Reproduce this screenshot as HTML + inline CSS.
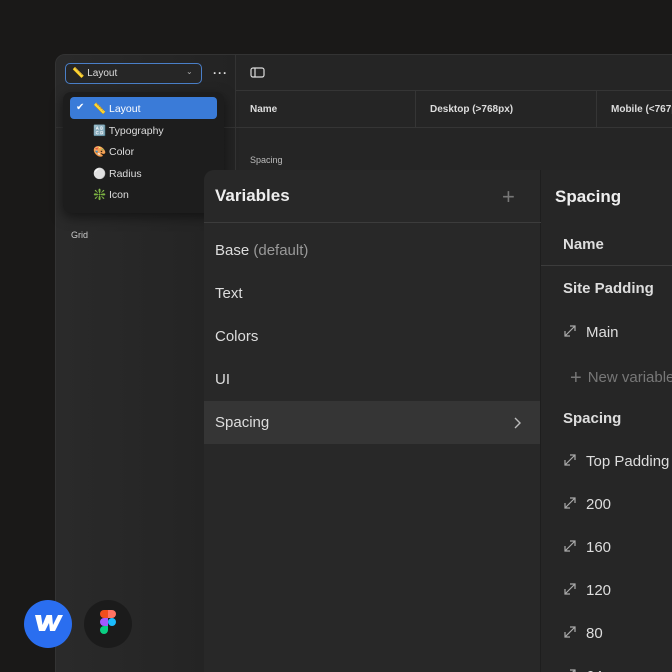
<!DOCTYPE html>
<html><head><meta charset="utf-8"><style>
*{margin:0;padding:0;box-sizing:border-box}
html,body{width:672px;height:672px;overflow:hidden}
body{background:#1a1918;font-family:"Liberation Sans",sans-serif;position:relative;color:#e6e6e6}
.abs{position:absolute}
.win{left:55px;top:54px;width:640px;height:640px;background:#252525;border:1px solid #333;border-radius:10px;overflow:hidden}
.side{left:0;top:0;width:180px;height:100%;background:linear-gradient(90deg,#2a2a2a,#232323);border-right:1px solid #333}
.t{font-size:10px;color:#ddd}
.vp{left:204px;top:170px;width:337px;height:502px;background:#282828;border-radius:10px 0 0 0;border-right:1px solid #1e1e1e}
.row{position:absolute;left:11px;font-size:15px;color:#ddd}
.sp{left:541px;top:170px;width:140px;height:502px;background:#262626;overflow:hidden}
.r2{position:absolute;left:22px;font-size:15px;color:#ddd;white-space:nowrap}
.ic{display:inline-block;width:14px;vertical-align:-1px;margin-right:9px}
</style></head><body>
<div class="abs win">
 <div class="abs side"></div>
 <div class="abs" style="left:180px;top:35px;width:460px;height:1px;background:#353535"></div>
 <div class="abs" style="left:180px;top:72px;width:460px;height:1px;background:#353535"></div>
 <div class="abs" style="left:0;top:72px;width:180px;height:1px;background:#333"></div>
 <div class="abs" style="left:359px;top:36px;width:1px;height:36px;background:#353535"></div>
 <div class="abs" style="left:540px;top:36px;width:1px;height:36px;background:#353535"></div>
 <div class="abs t" style="left:194px;top:49px;font-weight:bold">Name</div>
 <div class="abs t" style="left:374px;top:49px;font-weight:bold">Desktop (&gt;768px)</div>
 <div class="abs t" style="left:555px;top:49px;font-weight:bold;white-space:nowrap">Mobile (&lt;767px)</div>
 <div class="abs t" style="left:194px;top:100px;font-size:9px;color:#bbb">Spacing</div>
 <div class="abs t" style="left:15px;top:175px;font-size:9px;color:#ccc">Grid</div>
 <div class="abs" style="left:9px;top:8px;width:137px;height:21px;border:1px solid #4a7fc8;border-radius:5px;background:#262626"></div>
 <div class="abs t" style="left:16px;top:13px;font-size:10px">📏 Layout</div>
 <div class="abs t" style="left:130px;top:12px;font-size:8px;color:#aaa">⌄</div>
 <div class="abs" style="left:157px;top:11px;font-size:12px;color:#ddd;letter-spacing:1px;font-weight:bold">···</div>
 <svg class="abs" style="left:194px;top:12px" width="16" height="12"><rect x="1" y="1" width="13" height="9" rx="2" fill="none" stroke="#ddd" stroke-width="1.2"/><line x1="5" y1="1" x2="5" y2="10" stroke="#ddd" stroke-width="1.2"/></svg>
</div>
<div class="abs" style="left:63px;top:92px;width:161px;height:121px;background:#1d1d1d;border-radius:8px;box-shadow:0 4px 12px rgba(0,0,0,.5)"></div>
<div class="abs" style="left:70px;top:97px;width:147px;height:22px;background:#3a7bd8;border-radius:4px"></div>
<div class="abs t" style="left:76px;top:102px;font-size:10px;color:#fff">✔</div>
<div class="abs t" style="left:93px;top:102px;font-size:10.5px;color:#fff">📏 Layout</div>
<div class="abs t" style="left:93px;top:124px;font-size:10.5px">🔠 Typography</div>
<div class="abs t" style="left:93px;top:145px;font-size:10.5px">🎨 Color</div>
<div class="abs t" style="left:93px;top:167px;font-size:10.5px">⚪ Radius</div>
<div class="abs t" style="left:93px;top:188px;font-size:10.5px">❇️ Icon</div>

<div class="abs vp">
 <div class="row" style="top:16px;font-size:17px;font-weight:bold;color:#eee">Variables</div>
 <div class="abs" style="left:298px;top:14px;font-size:22px;color:#777;font-weight:300">+</div>
 <div class="abs" style="left:0;top:52px;width:337px;height:1px;background:#3c3c3c"></div>
 <div class="row" style="top:72px">Base <span style="color:#999">(default)</span></div>
 <div class="row" style="top:115px">Text</div>
 <div class="row" style="top:158px">Colors</div>
 <div class="row" style="top:201px">UI</div>
 <div class="abs" style="left:0;top:231px;width:336px;height:43px;background:#353535"></div>
 <div class="row" style="top:244px">Spacing</div>
 <svg class="abs" style="left:309px;top:246px" width="10" height="14"><path d="M2 2l5 5-5 5" fill="none" stroke="#bbb" stroke-width="1.4"/></svg>
</div>
<div class="abs sp">
 <div class="abs" style="left:14px;top:17px;font-size:17px;font-weight:bold;color:#eee">Spacing</div>
 <div class="abs" style="left:0;top:95px;width:140px;height:1px;background:#3c3c3c"></div>
 <div class="r2" style="top:66px;font-weight:bold">Name</div>
 <div class="r2" style="top:110px;font-weight:bold">Site Padding</div>
 <div class="r2" style="top:154px"><svg class="ic" width="14" height="14"><path d="M2 12L12 2M7 2h5v5M2 7v5h5" fill="none" stroke="#aaa" stroke-width="1.2"/></svg>Main</div>
 <div class="r2" style="top:197px;color:#777;left:29px"><span style="font-size:20px;vertical-align:-2px;margin-right:6px">+</span>New variable</div>
 <div class="r2" style="top:240px;font-weight:bold">Spacing</div>
 <div class="r2" style="top:283px"><svg class="ic" width="14" height="14"><path d="M2 12L12 2M7 2h5v5M2 7v5h5" fill="none" stroke="#aaa" stroke-width="1.2"/></svg>Top Padding</div>
 <div class="r2" style="top:326px"><svg class="ic" width="14" height="14"><path d="M2 12L12 2M7 2h5v5M2 7v5h5" fill="none" stroke="#aaa" stroke-width="1.2"/></svg>200</div>
 <div class="r2" style="top:369px"><svg class="ic" width="14" height="14"><path d="M2 12L12 2M7 2h5v5M2 7v5h5" fill="none" stroke="#aaa" stroke-width="1.2"/></svg>160</div>
 <div class="r2" style="top:412px"><svg class="ic" width="14" height="14"><path d="M2 12L12 2M7 2h5v5M2 7v5h5" fill="none" stroke="#aaa" stroke-width="1.2"/></svg>120</div>
 <div class="r2" style="top:455px"><svg class="ic" width="14" height="14"><path d="M2 12L12 2M7 2h5v5M2 7v5h5" fill="none" stroke="#aaa" stroke-width="1.2"/></svg>80</div>
 <div class="r2" style="top:498px"><svg class="ic" width="14" height="14"><path d="M2 12L12 2M7 2h5v5M2 7v5h5" fill="none" stroke="#aaa" stroke-width="1.2"/></svg>64</div>
</div>

<svg class="abs" style="left:24px;top:600px" width="48" height="48"><circle cx="24" cy="24" r="24" fill="#2a6ef0"/><path d="M11 15h6l1.5 10 4-10h5.5l1 10 5-10h5l-8 16h-5l-1-8-4 8h-6z" fill="#fff"/></svg>
<svg class="abs" style="left:84px;top:600px" width="48" height="48"><circle cx="24" cy="24" r="24" fill="#1b1b1b"/>
<path d="M20 10h4v8h-4a4 4 0 0 1 0-8z" fill="#f24e1e"/><path d="M24 10h4a4 4 0 0 1 0 8h-4z" fill="#ff7262"/>
<path d="M20 18h4v8h-4a4 4 0 0 1 0-8z" fill="#a259ff"/><circle cx="28" cy="22" r="4" fill="#1abcfe"/>
<path d="M20 26h4v4a4 4 0 1 1-4-4z" fill="#0acf83"/></svg>
</body></html>
